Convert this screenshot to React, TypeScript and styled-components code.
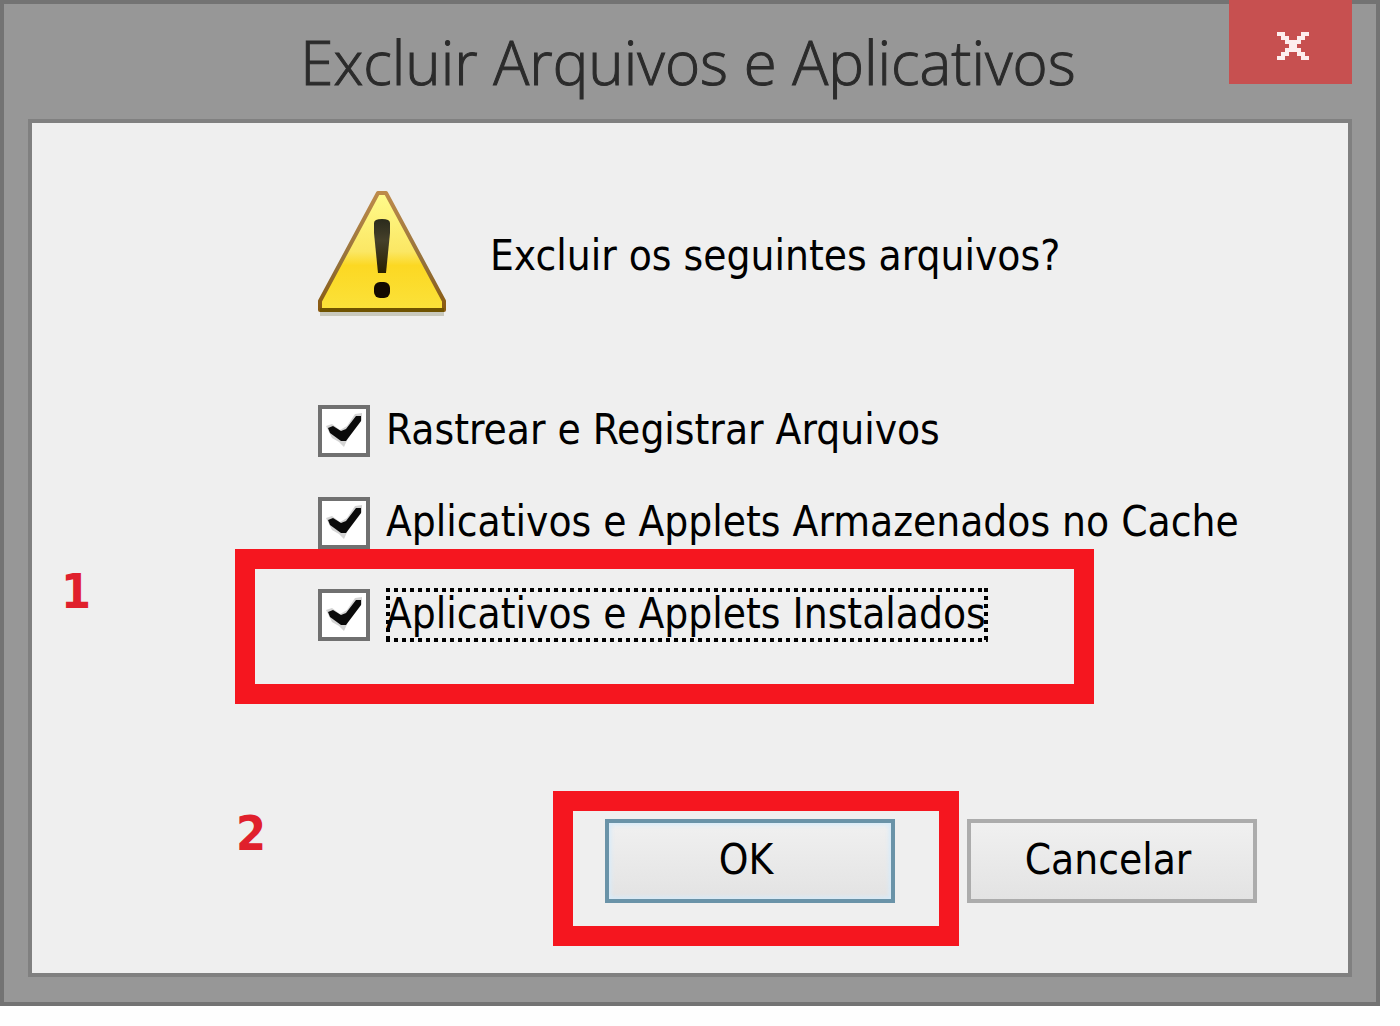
import React from "react";
import styled, { createGlobalStyle } from "styled-components";

const GlobalStyle = createGlobalStyle`
  * { box-sizing: border-box; }
  body { margin: 0; background: #fefefe; }
`;

const uiFont = `"DejaVu Sans Condensed", "DejaVu Sans", sans-serif`;
const red = "#f5161f";

const Window = styled.main`
  margin-right: 20px;
  padding: 0 24px 25px;
  border: 4px solid #737373;
  background: #979797;
  font-family: ${uiFont};
  color: #000;
`;

const TitleBar = styled.header`
  display: grid;
  grid-template-columns: 123px 1fr 123px;
  align-items: start;
  height: 115px;
`;

const Title = styled.h1`
  grid-column: 2;
  margin: 0;
  padding: 18px 4px 0 0;
  font: 300 60px/80px "Open Sans", "Noto Sans", sans-serif;
  text-align: center;
  white-space: nowrap;
  color: #2b2b2b;
  -webkit-text-stroke: 1px #2b2b2b;
`;

const CloseButton = styled.button`
  display: flex;
  align-items: center;
  justify-content: center;
  height: 84px;
  margin: -4px 0 0;
  padding: 8px 0 0 4px;
  border: 0;
  background: #c75050;
`;

const Client = styled.form`
  display: flex;
  flex-direction: column;
  padding: 68px 91px 70px 286px;
  border: 4px solid #808080;
  background: #efefef;
`;

const Question = styled.div`
  display: flex;
  align-items: center;
  gap: 44px;
  height: 128px;
`;

const Message = styled.p`
  margin: 0;
  padding-top: 2px;
  font-size: 42px;
  line-height: 52px;
  white-space: nowrap;
`;

const Options = styled.fieldset`
  display: flex;
  flex-direction: column;
  gap: 40px;
  margin: 86px 0 0;
  padding: 0;
  border: 0;
`;

const Option = styled.div`
  position: relative;
  display: flex;
  align-items: center;
  gap: 16px;
  height: 52px;
`;

const CheckFrame = styled.span`
  display: grid;
  flex: none;
  width: 52px;
  height: 52px;

  > * { grid-area: 1 / 1; }
  svg { margin: 4px; pointer-events: none; visibility: hidden; }
  input:checked + svg { visibility: visible; }
`;

const CheckInput = styled.input`
  appearance: none;
  width: 52px;
  height: 52px;
  margin: 0;
  border: 4px solid #707070;
  background: #fff;
`;

const dotsX = "repeating-linear-gradient(90deg, #000 0 4px, transparent 4px 8px)";
const dotsY = "repeating-linear-gradient(180deg, #000 0 4px, transparent 4px 8px)";

const OptionLabel = styled.label<{ $focused?: boolean }>`
  padding: 0 2px 2px 0;
  font-size: 42px;
  line-height: 52px;
  white-space: nowrap;
  background: ${(p) =>
    p.$focused
      ? `${dotsX} top / 100% 4px no-repeat, ${dotsX} bottom / 100% 4px no-repeat,
         ${dotsY} left / 4px 100% no-repeat, ${dotsY} right / 4px 100% no-repeat`
      : "none"};
`;

const Actions = styled.footer`
  display: flex;
  justify-content: flex-end;
  gap: 72px;
  margin-top: 178px;
`;

const Action = styled.div`
  position: relative;
`;

const PushButton = styled.button<{ $primary?: boolean }>`
  width: 290px;
  height: 84px;
  padding: 0 8px 2px 0;
  border: 4px solid ${(p) => (p.$primary ? "#6a93a8" : "#acacac")};
  background: linear-gradient(#f0f0f0, #e3e3e3);
  box-shadow: ${(p) => (p.$primary ? "inset 0 0 4px 2px #d6ebfa" : "none")};
  font: 42px/52px ${uiFont};
  color: #000;
`;

const Marker = styled.span<{ $x: number; $y: number; $w: number }>`
  position: absolute;
  left: ${(p) => p.$x}px;
  top: ${(p) => p.$y}px;
  width: ${(p) => p.$w}px;
  height: 155px;
  border: 20px solid ${red};
  pointer-events: none;
`;

const StepNumber = styled.span<{ $x: number; $y: number }>`
  position: absolute;
  left: ${(p) => p.$x}px;
  top: ${(p) => p.$y}px;
  font-size: 48px;
  font-weight: 700;
  line-height: 56px;
  color: #e0202c;
`;

const CloseGlyph = () => (
  <svg width="32" height="28" viewBox="0 0 8 7" shapeRendering="crispEdges" aria-hidden="true">
    <path
      fill="#fdeeee"
      d="M0 0h2v1h1v1h2V1h1V0h2v1H7v1H6v1H5v1h1v1h1v1h1v1H6V6H5V5H3v1H2v1H0V6h1V5h1V4h1V3H2V2H1V1H0z"
    />
  </svg>
);

const CheckGlyph = () => (
  <svg width="44" height="44" viewBox="0 0 44 44" aria-hidden="true">
    <path d="M4 17l6-2 8 6 7-4 8-12 7-1v7L26 29l-4 9-5-5-7-4z" fill="#d4d4d4" />
    <path d="M6 19l5-2 8 5 5-2L34 7h5v5L24 32h-5L8 24z" fill="#0a0a0a" />
  </svg>
);

const WarningIcon = () => (
  <svg width="128" height="128" viewBox="0 0 128 128" role="img" aria-label="Aviso">
    <defs>
      <linearGradient id="face" x1="0" y1="0" x2="0" y2="1">
        <stop offset="0" stopColor="#fffb8c" />
        <stop offset="0.5" stopColor="#fbe764" />
        <stop offset="0.62" stopColor="#fcd823" />
        <stop offset="1" stopColor="#fbe23a" />
      </linearGradient>
      <linearGradient id="edge" x1="0" y1="0" x2="0" y2="1">
        <stop offset="0" stopColor="#bd8a4a" />
        <stop offset="0.6" stopColor="#94713a" />
        <stop offset="1" stopColor="#8a5a10" />
      </linearGradient>
      <linearGradient id="bar" x1="0" y1="0" x2="0" y2="1">
        <stop offset="0" stopColor="#2b2b1c" />
        <stop offset="0.4" stopColor="#45402a" />
        <stop offset="1" stopColor="#2a2000" />
      </linearGradient>
    </defs>
    <path d="M2 121h124v4H2z" fill="#c9c9bd" />
    <path d="M60 2h8l58 108v9H2v-9z" fill="url(#face)" stroke="url(#edge)" strokeWidth="4" strokeLinejoin="round" />
    <path d="M2 119h124" stroke="#6f5300" strokeWidth="4" />
    <path d="M56 32q0-4 8-4t8 4v10l-4 40h-8l-4-40z" fill="url(#bar)" />
    <rect x="56" y="91" width="16" height="16" rx="6" fill="#150b00" />
  </svg>
);

type CheckOptionProps = { id: string; text: string; focused?: boolean; children?: React.ReactNode };

const CheckOption = ({ id, text, focused, children }: CheckOptionProps) => (
  <Option>
    <CheckFrame>
      <CheckInput id={id} type="checkbox" defaultChecked />
      <CheckGlyph />
    </CheckFrame>
    <OptionLabel htmlFor={id} $focused={focused}>{text}</OptionLabel>
    {children}
  </Option>
);

export default function App() {
  return (
    <>
      <GlobalStyle />
      <Window>
        <TitleBar>
          <Title>Excluir Arquivos e Aplicativos</Title>
          <CloseButton type="button" aria-label="Fechar"><CloseGlyph /></CloseButton>
        </TitleBar>
        <Client onSubmit={(e) => e.preventDefault()}>
          <Question>
            <WarningIcon />
            <Message>Excluir os seguintes arquivos?</Message>
          </Question>
          <Options>
            <CheckOption id="trace" text="Rastrear e Registrar Arquivos" />
            <CheckOption id="cached" text="Aplicativos e Applets Armazenados no Cache" />
            <CheckOption id="installed" text="Aplicativos e Applets Instalados" focused>
              <Marker $x={-83} $y={-40} $w={859} />
              <StepNumber $x={-257} $y={-26}>1</StepNumber>
            </CheckOption>
          </Options>
          <Actions>
            <Action>
              <PushButton type="submit" $primary>OK</PushButton>
              <Marker $x={-52} $y={-28} $w={406} />
              <StepNumber $x={-369} $y={-14}>2</StepNumber>
            </Action>
            <Action>
              <PushButton type="button">Cancelar</PushButton>
            </Action>
          </Actions>
        </Client>
      </Window>
    </>
  );
}
